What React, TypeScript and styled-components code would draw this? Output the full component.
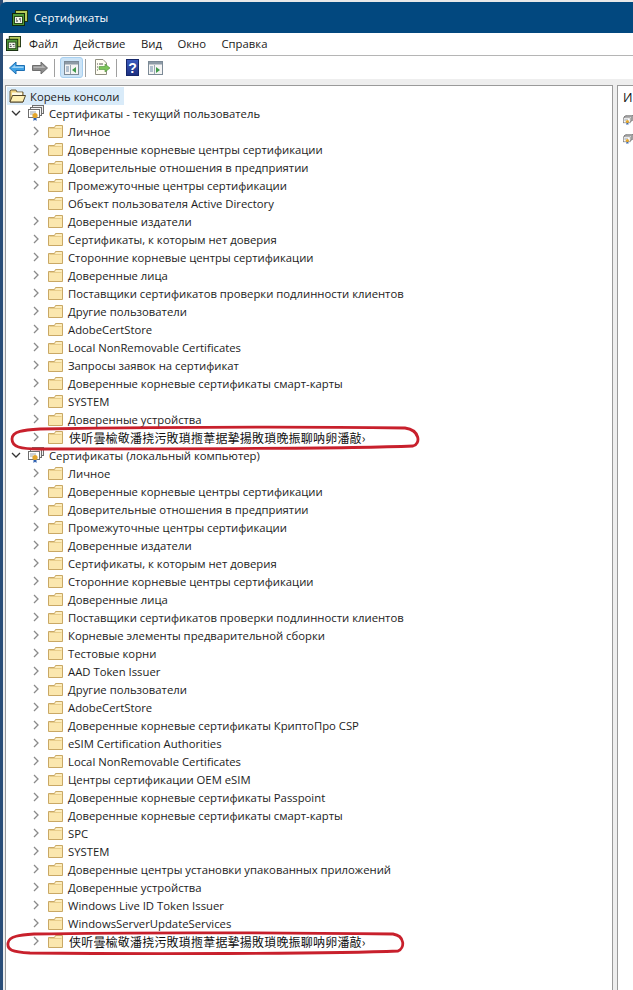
import React from "react";
import styled, { createGlobalStyle } from "styled-components";

const Global = createGlobalStyle`
  html, body { margin: 0; padding: 0; background: #fff; }
  body { font-family: "Open Sans", "Noto Sans CJK SC", sans-serif; }
`;

const Frame = styled.div`
  position: relative;
  width: 633px;
  height: 990px;
  overflow: hidden;
  background: #e8e8e8;
  display: flex;
  flex-direction: column;
  padding: 2px 0 0 3px;
  box-sizing: border-box;
  box-shadow: inset 3px 0 0 #2a4d78;
`;

const TitleBar = styled.div`
  height: 31px;
  background: #02487f;
  color: #fff;
  display: flex;
  align-items: center;
  gap: 6px;
  font-size: 11.3px;
  flex: none;
  margin-left: -3px;
  padding-left: 12px;
  border-top-left-radius: 6px;
`;

const MenuBar = styled.div`
  height: 22px;
  box-sizing: border-box;
  background: #fff;
  display: flex;
  align-items: center;
  padding: 0 0 2px 3px;
  font-size: 11.3px;
  color: #1a1a1a;
  flex: none;
`;

const MenuItem = styled.span`
  margin-left: 15.5px;
  &:first-of-type { margin-left: 8px; }
`;

const ToolBar = styled.div`
  height: 24px;
  background: #fff;
  border-top: 1px solid #b5b5b5;
  box-sizing: border-box;
  display: flex;
  align-items: center;
  padding-left: 6px;
  flex: none;
`;

const ToolSlot = styled.span<{ $ml: number }>`
  display: flex;
  align-items: center;
  margin-left: ${(p) => p.$ml}px;
`;

const ToolSep = styled.span<{ $ml: number }>`
  width: 1px;
  height: 18px;
  background: #a0a0a0;
  margin-left: ${(p) => p.$ml}px;
`;

const ToolActive = styled.span`
  width: 23px;
  height: 21px;
  margin-left: 5px;
  display: flex;
  align-items: center;
  justify-content: center;
  background: #cce4f7;
  border: 1px solid #a8d0f0;
  border-radius: 3px;
  box-sizing: border-box;
`;

const Panes = styled.div`
  flex: 1;
  display: flex;
  gap: 4px;
  padding: 6px 0 0 2px;
  background: #eeeeee;
  min-height: 0;
`;

const TreePane = styled.div`
  width: 608px;
  background: #fff;
  border: 1px solid #9a9a9a;
  border-bottom: 0;
  box-sizing: border-box;
  padding-top: 1px;
  flex: none;
`;

const ActionPane = styled.div`
  flex: 1;
  background: #fff;
  border: 1px solid #9a9a9a;
  border-right: 0;
  border-bottom: 0;
  padding: 3px 0 0 5px;
  font-size: 12.5px;
  color: #111;
  overflow: hidden;
  display: flex;
  flex-direction: column;
  gap: 3px;
`;

const ActionIcon = styled.div`
  height: 16px;
  display: flex;
  align-items: center;
`;

const Heading = styled.div`
  height: 18px;
  line-height: 18px;
  margin-bottom: 2px;
`;

const Row = styled.div<{ $pad: number }>`
  height: 18px;
  box-sizing: border-box;
  display: flex;
  align-items: center;
  padding: 0 0 2px ${(p) => p.$pad}px;
  font-size: 11.3px;
  color: #1c1c1c;
  white-space: nowrap;
`;

const RootRow = styled.div`
  height: 18px;
  display: flex;
  align-items: center;
  font-size: 11.3px;
  color: #1c1c1c;
`;

const RootLabel = styled.span`
  display: flex;
  align-items: center;
  width: 117px;
  box-sizing: border-box;
  height: 18px;
  gap: 4px;
  padding-left: 2px;
  background: #d9ebf9;
  margin-left: 1px;
`;

const Arrow = styled.span`
  width: 14px;
  height: 16px;
  display: flex;
  align-items: center;
  justify-content: center;
  flex: none;
`;

const IconSlot = styled.span<{ $ml: number }>`
  display: flex;
  flex: none;
  margin-left: ${(p) => p.$ml}px;
`;

const Label = styled.span<{ $ml: number }>`
  margin-left: ${(p) => p.$ml}px;
`;

const Moji = styled.span`
  margin-left: 6px;
  font-family: "Noto Sans CJK TC", "Noto Sans CJK SC", sans-serif;
  font-size: 12px;
  letter-spacing: 0.2px;
  color: #111;
`;

const Ellipse = styled.svg`
  position: absolute;
  left: 0;
  top: 0;
  pointer-events: none;
`;

const Chevron = ({ open }: { open?: boolean }) => (
  <svg width="10" height="10" viewBox="0 0 10 10" fill="none" stroke={open ? "#333" : "#8a8a8a"} strokeWidth="1.3">
    {open ? <path d="M1 3l4 4 4-4" /> : <path d="M3 1l4 4-4 4" />}
  </svg>
);

const Folder = () => (
  <svg width="15" height="13" viewBox="0 0 15 13">
    <path d="M.5 2.500V12.500H14.500V.5H7.500L6.500 2.500Z" fill="#fbe7ae" stroke="#c9a865" />
    <path d="M1.500 3.500H13.500" stroke="#e8cd8a" />
    <path d="M8 1.500H13.500V2.500H7.500Z" fill="#fff5d2" />
  </svg>
);

const OpenFolder = () => (
  <svg width="17" height="14" viewBox="0 0 17 14">
    <path d="M1 2V13H14V3H8L7 1H2Z" fill="#efd27c" stroke="#6b5d40" />
    <path d="M3 3.500H13V6H3Z" fill="#fffbe6" />
    <path d="M1 13L3.500 6.500H16.500L14 13Z" fill="#fff0b2" stroke="#4f442b" />
  </svg>
);

const CertStack = () => (
  <svg width="16" height="16" viewBox="0 0 16 16">
    <rect x="4.500" y=".5" width="11" height="8" fill="#eeeeee" stroke="#6e6e6e" />
    <rect x="2.500" y="2.500" width="11" height="8" fill="#f5f5f5" stroke="#6e6e6e" />
    <rect x=".5" y="4.500" width="11" height="8" fill="#fff" stroke="#6e6e6e" />
    <path d="M2 7h6M2 9h3" stroke="#98a0a8" />
    <path d="M5.500 11v5l1.500-1.200L8.500 16v-5" fill="#2b5fb0" />
    <circle cx="7" cy="10.500" r="2.600" fill="#e2a52c" />
  </svg>
);

const AppIcon = ({ size }: { size: number }) => (
  <svg width={size} height={size} viewBox="0 0 16 16">
    <rect x="3.500" y=".5" width="12" height="11" fill="#b5c95a" stroke="#1d3312" />
    <rect x=".5" y="3.500" width="12" height="12" fill="#4f9a38" stroke="#12280b" />
    <rect x="2.500" y="6.500" width="8" height="7" fill="#f3f6ea" stroke="#2a4a1c" />
    <path d="M4 9h1M7 9h2M4 11h2M8 11h1" stroke="#223" />
  </svg>
);

const BackIcon = () => (
  <svg width="16" height="14" viewBox="0 0 16 14">
    <path d="M.5 7L7 1V4.500H15.500V9.500H7V13Z" fill="#3fa2e6" stroke="#1d6fb3" />
    <path d="M2.500 7L6 4V5.500H14.500V7Z" fill="#9fd3f5" />
  </svg>
);

const ForwardIcon = () => (
  <svg width="16" height="14" viewBox="0 0 16 14">
    <path d="M15.500 7L9 1V4.500H.5V9.500H9V13Z" fill="#8c8c8c" stroke="#6e6e6e" />
    <path d="M1.500 5.500H10V4L13.500 7H1.500Z" fill="#b5b5b5" />
  </svg>
);

const PaneIcon = ({ flip }: { flip?: boolean }) => (
  <svg width="15" height="14" viewBox="0 0 15 14">
    <rect x=".5" y=".5" width="14" height="13" fill="#f4f4f4" stroke="#7c8a96" />
    <rect x="1" y="1" width="13" height="2.500" fill="#8d9aa6" />
    <path d="M6.500 4v9" stroke="#9aa7b3" />
    <path d="M2 6h3M2 8h3M2 10h3" stroke="#6c8aa8" />
    <path d={flip ? "M8 6l4 3-4 3Z" : "M12 6l-4 3 4 3Z"} fill="#3f9a4a" />
  </svg>
);

const ExportIcon = () => (
  <svg width="16" height="17" viewBox="0 0 16 17">
    <path d="M1.500.5H9L12.500 4V15.500H1.500Z" fill="#fffdf2" stroke="#8f8f80" />
    <path d="M3 5h1M3 8h1M3 11h1M5 5h4" stroke="#555" />
    <path d="M5 7.500h6V5l5 4-5 4v-2.500H5Z" fill="#7cc55a" stroke="#4c8f35" strokeWidth=".6" />
  </svg>
);

const HelpIcon = () => (
  <svg width="13" height="17" viewBox="0 0 13 17">
    <defs>
      <linearGradient id="helpFill" x1="0" y1="0" x2="0" y2="1">
        <stop offset="0" stopColor="#3c5cc0" />
        <stop offset="1" stopColor="#1c2f80" />
      </linearGradient>
    </defs>
    <rect x=".5" y=".5" width="12" height="16" fill="url(#helpFill)" stroke="#15276a" />
    <text x="6.500" y="13.500" textAnchor="middle" fill="#fff" fontFamily="Liberation Sans" fontWeight="700" fontSize="14">?</text>
  </svg>
);

const user = [
  "Личное",
  "Доверенные корневые центры сертификации",
  "Доверительные отношения в предприятии",
  "Промежуточные центры сертификации",
  "*Объект пользователя Active Directory",
  "Доверенные издатели",
  "Сертификаты, к которым нет доверия",
  "Сторонние корневые центры сертификации",
  "Доверенные лица",
  "Поставщики сертификатов проверки подлинности клиентов",
  "Другие пользователи",
  "AdobeCertStore",
  "Local NonRemovable Certificates",
  "Запросы заявок на сертификат",
  "Доверенные корневые сертификаты смарт-карты",
  "SYSTEM",
  "Доверенные устройства",
];

const local = [
  "Личное",
  "Доверенные корневые центры сертификации",
  "Доверительные отношения в предприятии",
  "Промежуточные центры сертификации",
  "Доверенные издатели",
  "Сертификаты, к которым нет доверия",
  "Сторонние корневые центры сертификации",
  "Доверенные лица",
  "Поставщики сертификатов проверки подлинности клиентов",
  "Корневые элементы предварительной сборки",
  "Тестовые корни",
  "AAD Token Issuer",
  "Другие пользователи",
  "AdobeCertStore",
  "Доверенные корневые сертификаты КриптоПро CSP",
  "eSIM Certification Authorities",
  "Local NonRemovable Certificates",
  "Центры сертификации OEM eSIM",
  "Доверенные корневые сертификаты Passpoint",
  "Доверенные корневые сертификаты смарт-карты",
  "SPC",
  "SYSTEM",
  "Доверенные центры установки упакованных приложений",
  "Доверенные устройства",
  "Windows Live ID Token Issuer",
  "WindowsServerUpdateServices",
];

const MOJI = "侠听曇楡敬潘挠污敗瑣揯葦据摯揚敗瑣晚振聊呐卵潘敲›";

const FolderRow = ({ text }: { text: string }) => {
  const noArrow = text.startsWith("*");
  return (
    <Row $pad={23}>
      <Arrow>{noArrow ? null : <Chevron />}</Arrow>
      <IconSlot $ml={5}><Folder /></IconSlot>
      <Label $ml={5}>{noArrow ? text.slice(1) : text}</Label>
    </Row>
  );
};

const MojiRow = () => (
  <Row $pad={23}>
    <Arrow><Chevron /></Arrow>
    <IconSlot $ml={5}><Folder /></IconSlot>
    <Moji>{MOJI}</Moji>
  </Row>
);

const CertRow = ({ text }: { text: string }) => (
  <Row $pad={3}>
    <Arrow><Chevron open /></Arrow>
    <IconSlot $ml={5}><CertStack /></IconSlot>
    <Label $ml={5}>{text}</Label>
  </Row>
);

export default function App() {
  return (
    <Frame>
      <Global />
      <TitleBar><AppIcon size={16} />Сертификаты</TitleBar>
      <MenuBar>
        <AppIcon size={15} />
        <MenuItem>Файл</MenuItem>
        <MenuItem>Действие</MenuItem>
        <MenuItem>Вид</MenuItem>
        <MenuItem>Окно</MenuItem>
        <MenuItem>Справка</MenuItem>
      </MenuBar>
      <ToolBar>
        <ToolSlot $ml={0}><BackIcon /></ToolSlot>
        <ToolSlot $ml={7}><ForwardIcon /></ToolSlot>
        <ToolSep $ml={6} />
        <ToolActive><PaneIcon /></ToolActive>
        <ToolSep $ml={2} />
        <ToolSlot $ml={8}><ExportIcon /></ToolSlot>
        <ToolSep $ml={6} />
        <ToolSlot $ml={9}><HelpIcon /></ToolSlot>
        <ToolSlot $ml={9}><PaneIcon flip /></ToolSlot>
      </ToolBar>
      <Panes>
        <TreePane>
          <RootRow>
            <RootLabel><OpenFolder />Корень консоли</RootLabel>
          </RootRow>
          <CertRow text="Сертификаты - текущий пользователь" />
          {user.map((t, i) => <FolderRow key={i} text={t} />)}
          <MojiRow />
          <CertRow text="Сертификаты (локальный компьютер)" />
          {local.map((t, i) => <FolderRow key={i} text={t} />)}
          <MojiRow />
        </TreePane>
        <ActionPane>
          <Heading>И</Heading>
          <ActionIcon><CertStack /></ActionIcon>
          <ActionIcon><CertStack /></ActionIcon>
        </ActionPane>
      </Panes>
      <Ellipse width="633" height="990" viewBox="0 0 633 990" fill="none" stroke="#c8202c" strokeWidth="2.800">
        <path d="M40 429C170 427 330 427 405 428C420 430 421 444 413 446C340 449 170 449 40 449C20 449 12 447 12 439C12 431 24 430 40 429Z" />
        <path d="M34 934C150 932 300 933 393 934C405 936 405 948 398 951C330 954 130 954 30 953C12 952 7 950 8 943C9 936 20 935 34 934Z" />
      </Ellipse>
    </Frame>
  );
}
